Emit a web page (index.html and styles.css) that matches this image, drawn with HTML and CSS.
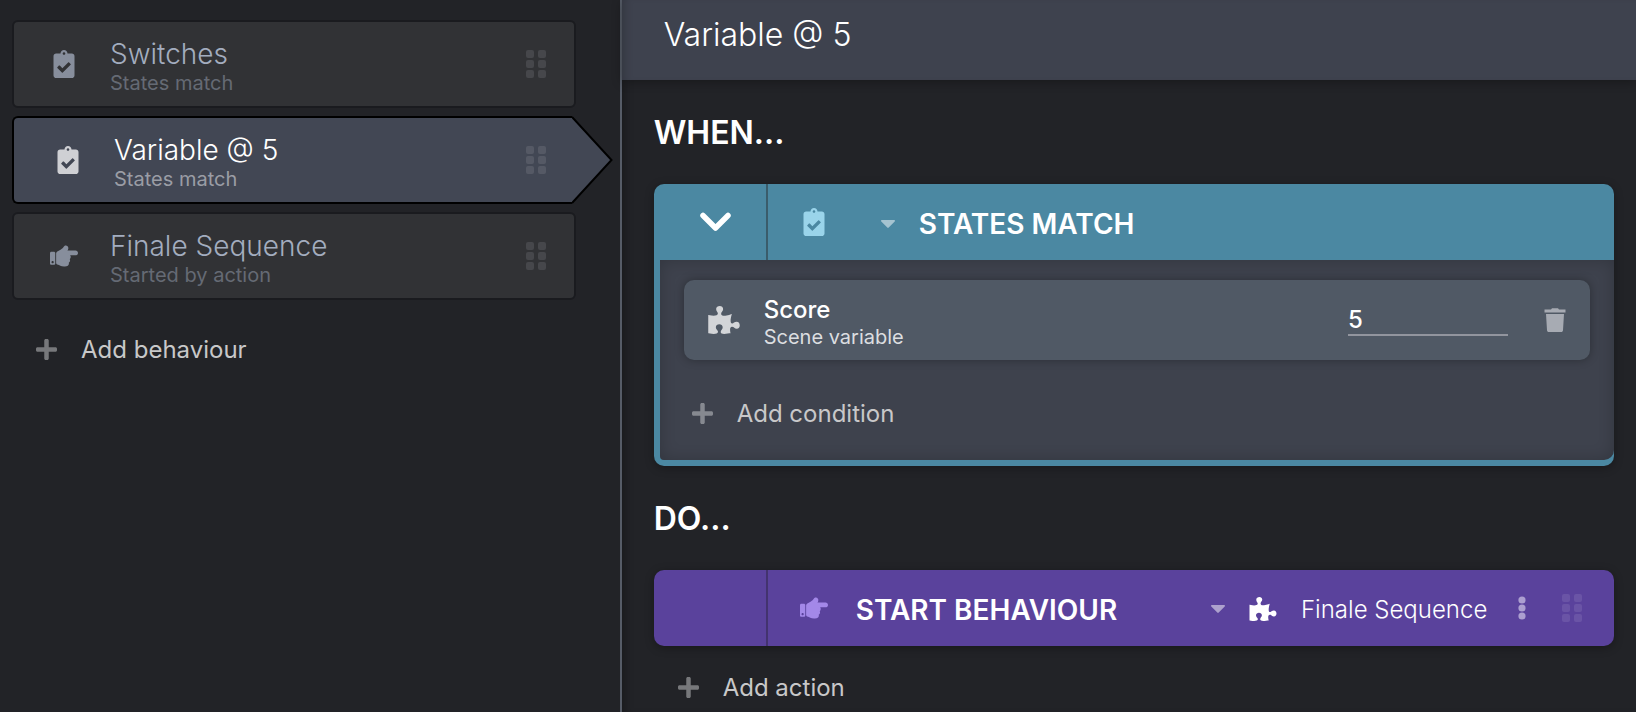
FILE: index.html
```html
<!DOCTYPE html>
<html lang="en">
<head>
    <meta charset="UTF-8">
    <title>Behaviours</title>
    <link rel="stylesheet" href="styles.css">
</head>
<body>
<svg class="sprite" aria-hidden="true">
    <symbol id="clipboard" viewBox="0 0 384 512">
        <path d="M336 64h-80c0-35.3-28.7-64-64-64s-64 28.7-64 64H48C21.5 64 0 85.5 0 112v352c0 26.5 21.5 48 48 48h288c26.5 0 48-21.5 48-48V112c0-26.5-21.5-48-48-48zM192 40c13.3 0 24 10.7 24 24s-10.7 24-24 24-24-10.7-24-24 10.7-24 24-24zm121.2 231.8l-143 141.8c-4.7 4.7-12.3 4.6-17-.1l-82.6-83.3c-4.7-4.7-4.6-12.3.1-17L99.1 285c4.7-4.7 12.3-4.6 17 .1l46 46.4 106-105.2c4.7-4.7 12.3-4.6 17 .1l28.2 28.4c4.7 4.8 4.6 12.3-.1 17z"/>
    </symbol>
    <symbol id="hand" viewBox="0 0 512 512">
        <path d="M512 199.652c0 23.625-20.65 43.826-44.8 43.826h-99.851c16.34 17.048 18.346 49.766-6.299 70.944 14.288 22.829 2.147 53.017-16.45 62.315C353.574 425.878 322.654 448 272 448c-2.746 0-13.276-.203-16-.195-61.971.168-76.894-31.065-123.731-38.315C120.596 407.683 112 397.599 112 385.786V214.261l.002-.001c.011-18.366 10.607-35.889 28.464-43.845 28.886-12.994 95.413-49.038 107.534-77.323 7.797-18.194 21.384-29.084 40-29.092 34.222-.014 57.752 35.098 44.119 66.908-3.583 8.359-8.312 16.67-14.153 24.918H467.2c23.45 0 44.8 20.543 44.8 43.826zM96 200v192c0 13.255-10.745 24-24 24H24c-13.255 0-24-10.745-24-24V200c0-13.255 10.745-24 24-24h48c13.255 0 24 10.745 24 24zM68 368c0-11.046-8.954-20-20-20s-20 8.954-20 20 8.954 20 20 20 20-8.954 20-20z"/>
    </symbol>
    <symbol id="puzzle" viewBox="0 0 576 512">
        <path d="M519.442 288.651c-41.519 0-59.5 31.593-82.058 31.593C377.409 320.244 432 144 432 144s-196.288 80-196.288-3.297c0-35.827 36.288-46.25 36.288-85.985C272 19.216 243.885 0 210.539 0c-34.654 0-66.366 18.891-66.366 56.346 0 41.364 31.711 59.277 31.711 81.75C175.885 207.719 0 166.758 0 166.758v333.237s178.635 41.047 178.635-28.662c0-22.473-40-40.107-40-81.471 0-37.456 29.25-56.346 63.577-56.346 33.673 0 61.788 19.216 61.788 54.717 0 39.735-36.288 50.158-36.288 85.985 0 60.803 129.675 25.73 181.23 25.73 0 0-34.725-120.101 25.827-120.101 35.962 0 46.423 36.152 86.308 36.152C556.712 416 576 387.99 576 354.443c0-34.199-18.962-65.792-56.558-65.792z"/>
    </symbol>
    <symbol id="plus" viewBox="0 32 448 448">
        <path d="M416 208H272V64c0-17.67-14.33-32-32-32h-32c-17.67 0-32 14.33-32 32v144H32c-17.67 0-32 14.33-32 32v32c0 17.67 14.33 32 32 32h144v144c0 17.67 14.33 32 32 32h32c17.67 0 32-14.33 32-32V304h144c17.67 0 32-14.33 32-32v-32c0-17.67-14.33-32-32-32z"/>
    </symbol>
    <symbol id="grip" viewBox="0 0 20 28">
        <rect width="8" height="8" rx="2"/>
        <rect x="12" width="8" height="8" rx="2"/>
        <rect y="10" width="8" height="8" rx="2"/>
        <rect x="12" y="10" width="8" height="8" rx="2"/>
        <rect y="20" width="8" height="8" rx="2"/>
        <rect x="12" y="20" width="8" height="8" rx="2"/>
    </symbol>
    <symbol id="caret" viewBox="0 0 14 8">
        <path d="M1 0h12c.9 0 1.300 1 .7 1.600L7.700 7.600c-.4.400-1 .400-1.400 0L.3 1.600C-.3 1 .1 0 1 0z"/>
    </symbol>
    <symbol id="chevron" viewBox="0 0 31 20">
        <path d="M3 3.500l12.500 12.500L28 3.500" fill="none" stroke="currentColor" stroke-width="5.500" stroke-linecap="round" stroke-linejoin="round"/>
    </symbol>
    <symbol id="trash" viewBox="0 0 22 24">
        <path d="M.5 1.500H7L8 .3h6l1 1.200h6.500v3H.5zM2 6h18l-1 16.200c-.1 1-.8 1.800-1.800 1.800H4.800c-1 0-1.700-.8-1.800-1.800z"/>
    </symbol>
    <symbol id="dots" viewBox="0 0 8 24">
        <circle cx="4" cy="4" r="3.600"/>
        <circle cx="4" cy="12" r="3.600"/>
        <circle cx="4" cy="20" r="3.600"/>
    </symbol>
</svg>

<div class="app">
    <aside class="sidebar">
        <ul class="list">
            <li>
                <button class="item" type="button">
                    <svg class="icon"><use href="#clipboard"/></svg>
                    <span class="text">
                        <span class="name">Switches</span>
                        <span class="sub">States match</span>
                    </span>
                    <svg class="grip"><use href="#grip"/></svg>
                </button>
            </li>
            <li>
                <button class="item active" type="button">
                    <svg class="icon"><use href="#clipboard"/></svg>
                    <span class="text">
                        <span class="name">Variable @ 5</span>
                        <span class="sub">States match</span>
                    </span>
                    <svg class="grip"><use href="#grip"/></svg>
                    <svg class="arrow" viewBox="0 0 41 88"><path d="M0 1l39.500 43L0 87"/></svg>
                </button>
            </li>
            <li>
                <button class="item" type="button">
                    <svg class="icon"><use href="#hand"/></svg>
                    <span class="text">
                        <span class="name">Finale Sequence</span>
                        <span class="sub">Started by action</span>
                    </span>
                    <svg class="grip"><use href="#grip"/></svg>
                </button>
            </li>
        </ul>
        <button class="add add-behaviour" type="button"><svg class="plus"><use href="#plus"/></svg>Add behaviour</button>
    </aside>

    <main class="main">
        <header class="top"><h1>Variable @ 5</h1></header>
        <div class="content">
            <h2>WHEN...</h2>
            <section class="block when">
                <div class="head">
                    <button class="toggle" type="button" aria-label="Collapse"><svg class="chevron"><use href="#chevron"/></svg></button>
                    <svg class="icon"><use href="#clipboard"/></svg>
                    <label class="type">
                        <svg class="caret"><use href="#caret"/></svg>
                        <select class="title" aria-label="Trigger type">
                            <option>STATES MATCH</option>
                        </select>
                    </label>
                </div>
                <div class="body">
                    <div class="condition">
                        <svg class="piece"><use href="#puzzle"/></svg>
                        <label class="text" for="score">
                            <span class="name">Score</span>
                            <span class="sub">Scene variable</span>
                        </label>
                        <input class="value" id="score" type="text" value="5">
                        <button class="trash" type="button" aria-label="Delete"><svg><use href="#trash"/></svg></button>
                    </div>
                    <button class="add add-condition" type="button"><svg class="plus"><use href="#plus"/></svg>Add condition</button>
                </div>
            </section>

            <h2>DO...</h2>
            <section class="block do">
                <div class="head">
                    <div class="toggle"></div>
                    <svg class="icon"><use href="#hand"/></svg>
                    <span class="title">START BEHAVIOUR</span>
                    <label class="target">
                        <svg class="caret"><use href="#caret"/></svg>
                        <svg class="piece"><use href="#puzzle"/></svg>
                        <select aria-label="Behaviour">
                            <option>Finale Sequence</option>
                        </select>
                    </label>
                    <button class="more" type="button" aria-label="More"><svg><use href="#dots"/></svg></button>
                    <svg class="grip"><use href="#grip"/></svg>
                </div>
            </section>
            <button class="add add-action" type="button"><svg class="plus"><use href="#plus"/></svg>Add action</button>
        </div>
    </main>
</div>
</body>
</html>
```
FILE: styles.css
```css
* {
    margin: 0;
    padding: 0;
    box-sizing: border-box;
}

body {
    background-color: #222327;
    color: #fff;
    font-family: Inter, "Liberation Sans", sans-serif;
    font-size: 24px;
}

ul {
    list-style: none;
}

svg {
    display: block;
    flex: none;
    fill: currentColor;
}

button, input, select {
    border: 0;
    outline: none;
    background: none;
    color: inherit;
    font: inherit;
    appearance: none;
}

button, select {
    cursor: pointer;
}

.sprite {
    display: none;
}

.app {
    display: flex;
    min-height: 100vh;
}

/* left column */
.sidebar {
    flex: 0 0 38%;
    padding: 20px 44px 20px 12px;
    border-right: 2px solid #565c67;
}

.list {
    display: flex;
    flex-direction: column;
    gap: 8px;
}

.item {
    position: relative;
    display: flex;
    align-items: center;
    width: 100%;
    height: 88px;
    padding: 0 28px 0 34px;
    border: 2px solid #1a1b1f;
    border-radius: 6px;
    background-color: #313235;
    color: #a3adbf;
    text-align: left;
}

.icon {
    width: 32px;
    height: 28px;
}

.item .icon {
    color: #878e9c;
}

.text {
    flex: 1;
    padding-top: 6px;
}

.item .text {
    margin-left: 30px;
}

.name, .sub {
    display: block;
}

.name {
    line-height: 32px;
}

.item .name {
    font-size: 28px;
    font-weight: 300;
}

.sub {
    font-size: 20px;
    line-height: 26px;
}

.item .sub {
    color: #656a74;
}

.grip {
    width: 20px;
    height: 28px;
    color: #46474b;
}

.active {
    width: calc(100% - 4px);
    padding: 0 26px 0 38px;
    border-color: #000;
    border-right: 0;
    border-radius: 6px 0 0 6px;
    background-color: #424754;
    color: #fff;
}

.active .icon {
    color: #cfd0d4;
}

.active .sub {
    color: #9a9da5;
}

.active .grip {
    color: #555965;
}

.arrow {
    position: absolute;
    top: -2px;
    left: 100%;
    width: 41px;
    height: 88px;
    fill: #424754;
    stroke: #000;
    stroke-width: 2;
}

.add {
    display: flex;
    align-items: center;
    gap: 24px;
    color: #c8c8c9;
    line-height: 32px;
}

.plus {
    width: 21px;
    height: 21px;
    margin-bottom: 2px;
    color: #77787b;
}

.add-behaviour {
    margin: 34px 0 0 24px;
}

/* right column */
.main {
    flex: 1;
    min-width: 0;
    box-shadow: inset 8px 0 10px -6px rgba(0, 0, 0, .3);
}

.top {
    height: 80px;
    padding: 0 42px;
    background-color: #3e424e;
    box-shadow: 0 2px 10px rgba(0, 0, 0, .3), inset 8px 0 10px -6px rgba(0, 0, 0, .2);
}

h1 {
    font-size: 32px;
    font-weight: 300;
    line-height: 70px;
}

.content {
    padding: 0 22px 0 32px;
}

h2 {
    padding-top: 2px;
    font-size: 32px;
    font-weight: 600;
    line-height: 102px;
}

.block {
    overflow: hidden;
    border-radius: 10px;
    box-shadow: 0 2px 10px rgba(0, 0, 0, .3);
}

.head {
    display: flex;
    align-items: center;
    height: 76px;
}

.toggle {
    display: flex;
    align-items: center;
    justify-content: center;
    width: 114px;
    height: 100%;
    margin-right: 30px;
    padding-left: 12px;
    border-right: 2px solid #3a5c6b;
}

.chevron {
    width: 31px;
    height: 20px;
}

.title {
    font-size: 28px;
    font-weight: 600;
}

.caret {
    width: 14px;
    height: 8px;
    opacity: .5;
}

.when {
    background-color: #4b88a2;
}

.when .icon {
    color: #9ad4ea;
}

.type {
    display: flex;
    align-items: center;
    gap: 24px;
    margin-left: 51px;
    padding-top: 4px;
}

.body {
    margin: 0 0 6px 6px;
    padding: 20px 24px 30px;
    border-radius: 0 0 10px 4px;
    background-color: #3e424d;
    box-shadow: inset 0 0 16px rgba(0, 0, 0, .2);
}

.condition {
    display: flex;
    align-items: center;
    height: 80px;
    padding: 0 24px;
    border-radius: 10px;
    background-color: #505965;
    box-shadow: 0 0 10px rgba(0, 0, 0, .3);
}

.condition .piece {
    width: 32px;
    height: 28px;
    color: #d3d5d8;
}

.condition .text {
    margin-left: 24px;
}

.condition .name {
    font-weight: 500;
    line-height: 28px;
}

.condition .sub {
    color: #dcdee0;
}

.value {
    width: 160px;
    height: 32px;
    border-bottom: 2px solid #92959e;
    font-weight: 500;
}

.trash {
    margin-left: 36px;
    color: #a7abb3;
}

.trash svg {
    width: 22px;
    height: 24px;
}

.add-condition {
    margin: 38px 0 0 8px;
}

.add-condition .plus {
    color: #868990;
}

.do {
    background-color: #5a429c;
}

.do .toggle {
    border-color: #43336f;
}

.do .icon {
    color: #a388e8;
}

.do .title {
    flex: 1;
    margin-left: 26px;
    padding-top: 4px;
}

.target {
    display: flex;
    align-items: center;
    gap: 24px;
    padding-top: 2px;
}

.target select {
    font-weight: 300;
}

.target .piece {
    width: 28px;
    height: 24px;
}

.more {
    margin: 0 36px 0 30px;
    color: #ac9fd0;
}

.more svg {
    width: 8px;
    height: 24px;
}

.do .grip {
    margin-right: 32px;
    color: #6a54a6;
}

.add-action {
    margin: 26px 0 0 24px;
}
```
